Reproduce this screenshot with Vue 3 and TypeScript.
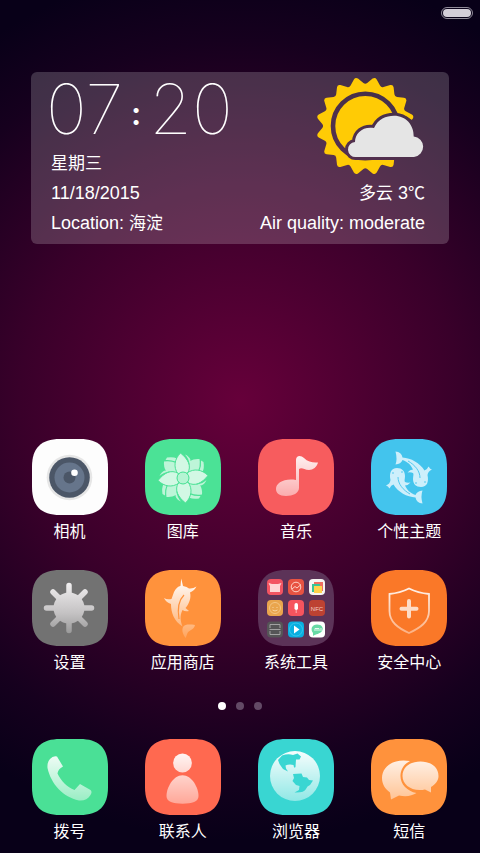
<script setup lang="ts">
interface AppEntry {
  id: string
  label: string
  color: string
}

const apps: AppEntry[] = [
  { id: 'camera', label: '相机', color: '#fdfdfd' },
  { id: 'gallery', label: '图库', color: '#4be296' },
  { id: 'music', label: '音乐', color: '#f75c5e' },
  { id: 'themes', label: '个性主题', color: '#43c4ed' },
  { id: 'settings', label: '设置', color: '#727272' },
  { id: 'store', label: '应用商店', color: '#ff923c' },
  { id: 'tools', label: '系统工具', color: '#5c3358' },
  { id: 'security', label: '安全中心', color: '#fa7828' },
]

const dock: AppEntry[] = [
  { id: 'phone', label: '拨号', color: '#4ae096' },
  { id: 'contacts', label: '联系人', color: '#ff6950' },
  { id: 'browser', label: '浏览器', color: '#39d6d2' },
  { id: 'messages', label: '短信', color: '#ff923c' },
]

const groups = [
  { name: 'home', items: apps },
  { name: 'dock', items: dock },
]

const pages = 3
const quarters = [0, 90, 180, 270]

// Sixteen rounded teeth around the sun's rim.
const teeth = Array.from({ length: 16 }, (_, i) => {
  const at = (deg: number, r: number) => {
    const a = (deg * Math.PI) / 180
    return `${(48.3 + r * Math.sin(a)).toFixed(1)} ${(49 + r * Math.cos(a)).toFixed(1)}`
  }
  const c = i * 22.5
  return `${i ? 'L' : 'M'}${at(c + 2.5, 43)} L${at(c + 8.8, 48)} Q${at(c + 11.25, 50)} ${at(c + 13.7, 48)} L${at(c + 20, 43)} Q${at(c + 22.5, 41.5)} ${at(c + 25, 43)}`
}).join(' ') + 'Z'

const cloud =
  'M39 80 A7.5 7.5 0 0 1 38 65 C38 56 46 49 57 51 C61 42 69 38.7 77 38.7 C89 38.7 97 48 96.7 59.5 A10.3 10.3 0 0 1 97 80 Z'
</script>

<template>
  <main class="screen">
    <svg class="defs" aria-hidden="true">
      <defs>
        <linearGradient id="fade" gradientUnits="userSpaceOnUse" x1="0" y1="12" x2="0" y2="66">
          <stop offset="0" stop-color="#fff" stop-opacity="0.96" />
          <stop offset="1" stop-color="#fff" stop-opacity="0.4" />
        </linearGradient>
        <linearGradient id="fadeDeep" gradientUnits="userSpaceOnUse" x1="0" y1="12" x2="0" y2="66">
          <stop offset="0" stop-color="#fff" stop-opacity="0.95" />
          <stop offset="1" stop-color="#fff" stop-opacity="0.2" />
        </linearGradient>
        <linearGradient id="steel" gradientUnits="userSpaceOnUse" x1="0" y1="12" x2="0" y2="64">
          <stop offset="0" stop-color="#f2f0f1" />
          <stop offset="0.6" stop-color="#c4c2c3" />
          <stop offset="1" stop-color="#989898" />
        </linearGradient>
      </defs>
    </svg>

    <header class="status"><span class="battery"><span class="charge"></span></span></header>

    <section class="weather">
      <div class="col">
        <time class="clock"><span>07</span><span class="colon">:</span><span>20</span></time>
        <p><span class="cjk">星期三</span></p>
        <p>11/18/2015</p>
        <p>Location: <span class="cjk">海淀</span></p>
      </div>
      <div class="col right">
        <svg class="sun" viewBox="0 0 108 98" aria-hidden="true">
          <mask id="behindCloud">
            <rect width="108" height="98" fill="#fff" />
            <circle cx="48.3" cy="49" r="32.3" fill="none" stroke="#000" stroke-width="4.6" />
            <path :d="cloud" fill="#000" stroke="#000" stroke-width="6" />
            <path d="M84 38 Q90 39 95 43 H108 V98 H77.5 V60Z" fill="#000" />
          </mask>
          <path :d="teeth" fill="#ffcb05" mask="url(#behindCloud)" />
          <path :d="cloud" fill="#e5e5e5" />
        </svg>
        <p><span class="cjk">多云</span> 3<span class="cjk">℃</span></p>
        <p>Air quality: moderate</p>
      </div>
    </section>

    <template v-for="group in groups" :key="group.name">
      <nav :class="['grid', group.name]">
        <button v-for="app in group.items" :key="app.id" type="button" class="app">
          <svg class="tile" viewBox="0 0 76 76" aria-hidden="true">
            <path
              d="M0 38 V28 C0 9 9 0 28 0 H48 C67 0 76 9 76 28 V48 C76 67 67 76 48 76 H28 C9 76 0 67 0 48Z"
              :fill="app.color"
            />
            <g v-if="app.id === 'camera'">
              <circle cx="37.5" cy="38.5" r="22.8" fill="#e6e6e6" />
              <circle cx="37.5" cy="38.5" r="20.3" fill="#4b5667" />
              <circle cx="37.5" cy="38.5" r="15" fill="#66758b" />
              <circle cx="37.5" cy="38.5" r="6" fill="#4b5667" />
              <circle cx="42.5" cy="33.8" r="3.3" fill="#fff" />
            </g>
            <g v-else-if="app.id === 'gallery'">
              <g v-for="q in quarters" :key="q" :transform="`rotate(${q} 38 39)`" fill="#bdf5d8">
                <path d="M33 34 L21 32 Q18.500 28 19 22.500 Q26 21.500 31 24Z" />
                <path d="M20.500 21 L22 18.500 Q28 17.500 32 19.500 L30.500 22.500 Q26 20.500 20.500 21Z" />
                <path d="M14.500 37 Q16.500 32.500 20 31.500 L24 32.500 Q18 33.500 14.500 37Z" />
              </g>
              <g v-for="q in quarters" :key="`petal-${q}`" :transform="`rotate(${q} 38 39)`">
                <path
                  d="M35.500 14 C43 20 47 27 42.500 34.500 Q38 32 33 35 C28 28 29.500 20 35.500 14Z"
                  fill="#d2f8e4"
                  stroke="#4be296"
                  stroke-width="1"
                />
              </g>
              <circle cx="38" cy="39" r="6" fill="#b5f4d3" stroke="#4be296" />
            </g>
            <g v-else-if="app.id === 'music'" fill="url(#fade)">
              <path
                d="M38 41 V21 C38 16 43 16 46 19 C50 23 55 24 60 23.500 C59 28 55 31 51 31 C46 31 44 28 41 30 V49 C41 54 35 57 28 57 C21 57 18 54 18 50 C18 44 26 39 38 41Z"
              />
            </g>
            <g v-else-if="app.id === 'themes'">
              <g v-for="turn in [0, 180]" :key="turn" :transform="`rotate(${turn} 38 38.5)`" fill="#cdeffb">
                <path
                  d="M26 29 C31 29 34 32 34 37 C34 40 33 42 34 43 Q36 44 39.500 43.500 Q37 46.500 34 46.500 C36 51 39 54 44.500 56 Q46 52 51.500 51.500 Q49.500 57 51.500 64.500 Q45.500 64 44.500 58.500 C36 58 27 53 22.500 45.500 Q20 46 18.500 49.500 Q17 47 15 46.500 Q19 45 19.500 41 C18 34 20 29 26 29Z"
                />
                <path d="M27 38 C27 45 32 51 39 55" fill="none" stroke="#43c4ed" stroke-width="0.9" />
                <circle cx="22" cy="34" r="0.8" fill="#43c4ed" />
                <circle cx="31" cy="33" r="0.8" fill="#43c4ed" />
              </g>
            </g>
            <g v-else-if="app.id === 'settings'">
              <path
                d="M37 15.500V24 M37 52V60.500 M14.500 38H23 M51 38H59.500 M21 22L27 28 M53 22L47 28 M21 54L27 48 M53 54L47 48"
                stroke="url(#steel)"
                stroke-width="5.5"
                stroke-linecap="round"
              />
              <circle cx="37" cy="38" r="15.500" fill="url(#steel)" />
            </g>
            <g v-else-if="app.id === 'store'" fill="url(#fadeDeep)">
              <path
                d="M29 22 C31 18 33 16.500 35.500 16 L36.200 8.500 L38 16 Q42 16.500 44 18.500 Q48 19 51.500 16.500 Q49 21 45 22.500 C46.500 28 44 34 40.500 38 L44 41 Q40 42 37.500 40 C34.500 46 35.500 51 37.500 56.500 C29 51 26 43 26 34 Q21 32.500 19 28 Q22 30 26.500 29Z"
              />
              <path d="M38 57 C40 54 45 54.500 50 55 C49 60 44 60 42.500 63 Q41.500 66 40.500 68 C38 64 36.500 61 38 57Z" />
              <path d="M39 25 C34 30 32 37 34 49" fill="none" stroke="#ff923c" stroke-width="1.200" />
            </g>
            <g v-else-if="app.id === 'tools'">
              <g>
                <rect x="9" y="9" width="16" height="16" rx="4" fill="#f35462" />
                <path d="M10.500 13 L14 14 H20 L23.500 13 L22 16 V22 H12 V16Z" fill="#ffd5d5" />
                <rect x="30" y="9" width="16" height="16" rx="4" fill="#e85342" />
                <circle cx="38" cy="17" r="4.8" fill="none" stroke="#ffd2c6" />
                <path d="M34 19 L37 16.500 L39 18 L43 14.500" fill="none" stroke="#ffd2c6" />
                <rect x="51" y="9" width="16" height="16" rx="4" fill="#f5f4f2" />
                <path d="M56 12H65V21H56Z" fill="#ef6e61" />
                <path d="M54 14H62V22H54Z" fill="#37c397" />
                <path d="M56 16H64V23H56Z" fill="#ffd24c" />
              </g>
              <g>
                <rect x="9" y="30" width="16" height="16" rx="4" fill="#e9a54d" />
                <circle cx="17" cy="38" r="5.500" fill="none" stroke="#f4c584" />
                <path d="M15 37V38 M19 37V38 M14.500 40 Q17 42 19.500 40" fill="none" stroke="#f7d4a1" />
                <rect x="30" y="30" width="16" height="16" rx="4" fill="#f6545e" />
                <rect x="36.500" y="33" width="3.500" height="7" rx="1.700" fill="#fff" />
                <path d="M38.200 40V43" stroke="#ffafb2" />
                <rect x="51" y="30" width="16" height="16" rx="4" fill="#bd4232" />
                <text x="59" y="40.500" class="nfc">NFC</text>
              </g>
              <g>
                <rect x="9" y="51.500" width="16" height="16" rx="4" fill="#555557" />
                <path d="M12 58V54.500H22V58 M12 61V64.500H22V61 M11.500 59.500H22.500" fill="none" stroke="#aaa" stroke-width="0.9" />
                <rect x="30" y="51.500" width="16" height="16" rx="4" fill="#08afe0" />
                <circle cx="38" cy="59.500" r="6.500" fill="none" stroke="#4ccbed" stroke-width="0.700" />
                <path d="M36 55.500 L41.500 59.500 L36 63.500Z" fill="#fff" />
                <rect x="51" y="51.500" width="16" height="16" rx="4" fill="#fff" />
                <path d="M55 63 C52 59 54 54.500 59 54.500 C64 54.500 66 58 64 61 C62 64 58 64 55 66Z" fill="#67d9a5" />
                <path d="M57 61V58.500H61V61 M59 58.500V61 M63 58V61" fill="none" stroke="#fff" stroke-width="0.800" />
              </g>
            </g>
            <g v-else-if="app.id === 'security'">
              <path
                d="M38 18.500 Q47 23 58 24 V41 C58 52 49 58 38 63 C27 58 18.500 52 18.500 41 V24 Q29 23 38 18.500Z"
                fill="none"
                stroke="url(#fade)"
                stroke-width="1.800"
              />
              <path d="M38 31V46.500 M30.500 38.700H45.500" stroke="#fddcc6" stroke-width="4" stroke-linecap="round" />
            </g>
            <g v-else-if="app.id === 'phone'" fill="url(#fade)">
              <path
                d="M18 20 Q21 16.500 25 17.500 L31 27.500 Q26 30 25.500 34.500 C29 42 35 48 42.500 51 L48 45 L58.500 51 Q60.500 53 58.500 56 C56 60 52 62 47 61.500 C31 58 19 45 15.500 29 Q15 23 18 20Z"
              />
            </g>
            <g v-else-if="app.id === 'contacts'" fill="url(#fade)">
              <circle cx="37.500" cy="24" r="9.400" />
              <path d="M37.500 36.300 C47 36.300 53.500 49 53.500 57 C53.500 63 47 64.700 37.500 64.700 C28 64.700 21.500 63 21.500 57 C21.500 49 28 36.300 37.500 36.300Z" />
            </g>
            <g v-else-if="app.id === 'browser'">
              <circle cx="37" cy="37" r="25" fill="url(#fade)" />
              <g fill="#39d6d2">
                <path
                  d="M20 21 L24 16.500 Q30 14.500 35 16 L39.500 14.500 L43 17.500 L41.500 20.500 H38 L37.500 28 Q36 30 35.500 26 Q31 25 27.500 26.500 L28 29.500 L30 32.500 L25 30 L21.500 25Z"
                />
                <path
                  d="M35 35 L43.500 34.500 L45 38 L49 38.500 L51 41 L55 41.500 L52 46 Q49 47 48 50 Q46 54 36.500 53.500 L41 51 L41.500 47 L38 46 L34.500 42 L36 39Z"
                />
              </g>
            </g>
            <g v-else fill="url(#fade)">
              <path d="M39 22 C22 19 11 28 11 39 C11 45 14 50 19 53.500 L20 60.500 L28 56.500 C35 58 41 57 45.500 54 C36 52 29 45 29.500 36 C30 30 33 25 39 22Z" />
              <path
                d="M49.500 22.500 C60 22.500 67.500 28 67.500 37 C67.500 41.500 64.500 45.500 60 48 L60 53.500 L54 50.500 C41 53 31.500 46 31.500 37 C31.500 28 39 22.500 49.500 22.500Z"
              />
            </g>
          </svg>
          <span class="label">{{ app.label }}</span>
        </button>
      </nav>
      <div v-if="group.name === 'home'" class="dots">
        <i v-for="n in pages" :key="n" :class="['dot', { active: n === 1 }]"></i>
      </div>
    </template>
  </main>
</template>

<style>
body {
  background: #080018;
}
</style>

<style scoped>
.screen {
  box-sizing: border-box;
  min-height: 100vh;
  display: flex;
  flex-direction: column;
  padding-bottom: 9px;
  background: radial-gradient(circle 440px at 50% 47%, #66003a 0%, #39002a 50%, #16001e 82%, #080018 100%);
  color: #fff;
  font-family: 'Liberation Sans', 'Noto Sans CJK SC', sans-serif;
}

.defs {
  position: absolute;
  width: 0;
  height: 0;
}

.status {
  display: flex;
  justify-content: flex-end;
  padding: 7px 7px 0;
}

.battery {
  box-sizing: border-box;
  width: 32px;
  height: 12px;
  padding: 1px;
  border: 1px solid #8f8a98;
  border-radius: 6px;
}

.charge {
  display: block;
  height: 8px;
  border-radius: 4px;
  background: #d3ced8;
}

.weather {
  display: flex;
  justify-content: space-between;
  margin: 53px 31px 0;
  padding: 5px 24px 6px 15px;
  border-radius: 6px;
  background: rgba(255, 255, 255, 0.19);
}

.weather p {
  margin: 0;
  font-size: 18px;
  line-height: 30px;
  white-space: nowrap;
}

.weather .col:first-child p {
  padding-left: 5px;
}

.cjk {
  font-size: 17px;
  line-height: 24px;
}

.col {
  display: flex;
  flex-direction: column;
}

.right {
  align-items: flex-end;
  text-align: right;
}

.clock {
  display: flex;
  align-items: center;
  padding-bottom: 6px;
  font-family: Inter, 'Liberation Sans', sans-serif;
  font-size: 69px;
  font-weight: 100;
  line-height: 65px;
}

.colon {
  width: 26px;
  padding-top: 8px;
  font-size: 32px;
  font-weight: 600;
  line-height: 57px;
  text-align: center;
}

.sun {
  width: 108px;
  height: 98px;
  margin-bottom: 3px;
}

.grid {
  display: grid;
  grid-template-columns: repeat(4, 1fr);
  row-gap: 26px;
  padding: 0 14px 0 13px;
}

.home {
  margin-top: auto;
}

.app {
  display: flex;
  flex-direction: column;
  align-items: center;
  gap: 5px;
  padding: 0;
  border: 0;
  background: none;
  color: inherit;
  font: inherit;
}

.tile {
  width: 76px;
  height: 76px;
}

.label {
  font-size: 16px;
  line-height: 24px;
  white-space: nowrap;
}

.nfc {
  fill: #f3cdc6;
  font-size: 6px;
  text-anchor: middle;
}

.dots {
  display: flex;
  justify-content: center;
  gap: 10px;
  padding: 27px 0 29px;
}

.dot {
  width: 8px;
  height: 8px;
  border-radius: 50%;
  background: #634a66;
}

.dot.active {
  background: #fff;
}
</style>
